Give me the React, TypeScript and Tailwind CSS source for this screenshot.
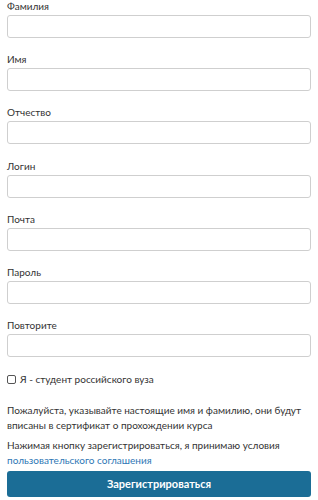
import { useState } from 'react'

const fields = ['Фамилия', 'Имя', 'Отчество', 'Логин', 'Почта', 'Пароль', 'Повторите']

export default function App() {
  const [student, setStudent] = useState(false)

  return (
    <div className="w-[318px] h-[500px] bg-white px-[7px] font-['Lato',sans-serif] text-[#333] text-[10px] overflow-hidden">
      {fields.map((f) => (
        <div key={f} className="mb-[15.2px]">
          <label className="block leading-[12px] mb-[3px]">{f}</label>
          <input
            type={f.startsWith('Пар') || f === 'Повторите' ? 'password' : 'text'}
            autoFocus={f === 'Логин'}
            className="block w-full h-[23px] rounded-[3px] border border-[#cfcfcf] bg-white px-[7px] text-[12px] outline-none caret-[#555]"
          />
        </div>
      ))}
      <label className="mt-[11px] flex items-center gap-[4px] leading-[14px]">
        <input
          type="checkbox"
          checked={student}
          onChange={(e) => setStudent(e.target.checked)}
          className="h-[9px] w-[9px] appearance-none rounded-[2px] border border-[#555] bg-white"
        />
        <span>Я - студент российского вуза</span>
      </label>
      <p className="mt-[17px] leading-[15px]">
        Пожалуйста, указывайте настоящие имя и фамилию, они будут вписаны в сертификат о прохождении курса
      </p>
      <p className="mt-[5px] leading-[15px]">
        Нажимая кнопку зарегистрироваться, я принимаю условия{' '}
        <a className="text-[#2e77b5]">пользовательского соглашения</a>
      </p>
      <button className="mt-[3px] block h-[26px] w-full rounded-[3px] bg-[#1b6d96] text-[11px] text-white font-bold">
        Зарегистрироваться
      </button>
    </div>
  )
}
